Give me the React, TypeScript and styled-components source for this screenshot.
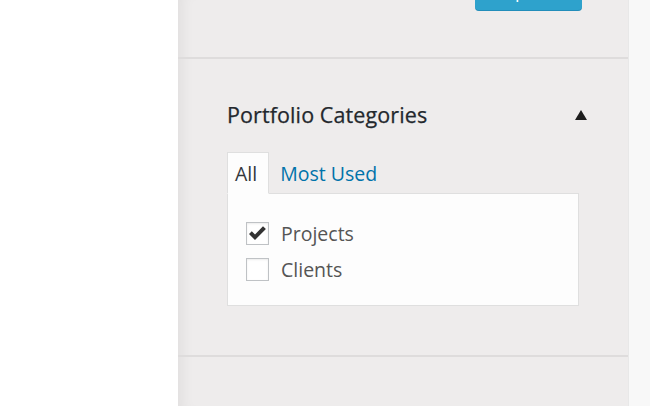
import React from "react";
import styled, { createGlobalStyle } from "styled-components";

const Global = createGlobalStyle`
  html, body { margin: 0; padding: 0; background: #fff; }
  body { font-family: "Open Sans", "Liberation Sans", sans-serif; }
  * { box-sizing: border-box; }
`;

const Page = styled.div`
  display: flex;
  height: 406px;
  overflow: hidden;
`;

const LeftArea = styled.div`
  width: 178px;
  flex: none;
  background: #fff;
`;

const Sidebar = styled.div`
  width: 450px;
  flex: none;
  background: #eeecec;
  box-shadow: inset 14px 0 14px -10px rgba(0, 0, 0, 0.06);
  display: flex;
  flex-direction: column;
`;

const RightStrip = styled.div`
  flex: 1;
  background: #f8f8f8;
  border-left: 1px solid #e8e8e8;
`;

const TopBox = styled.div`
  height: 59px;
  border-bottom: 2px solid #dedcdc;
  display: flex;
  justify-content: flex-end;
  padding-right: 46px;
`;

const PrimaryButton = styled.div`
  width: 107px;
  height: 11px;
  background: #2ea2cc;
  border-radius: 0 0 4px 4px;
  box-shadow: inset 0 -1px 0 rgba(0, 80, 130, 0.25);
  overflow: hidden;
  position: relative;
`;

const ButtonText = styled.span`
  position: absolute;
  left: 27px;
  bottom: 11px;
  color: #fff;
  font-size: 18px;
  line-height: 18px;
  white-space: nowrap;
`;

const CategoryBox = styled.div`
  height: 298px;
  border-bottom: 2px solid #dedcdc;
  padding: 41px 49px 0 49px;
  display: flex;
  flex-direction: column;
`;

const HeaderRow = styled.div`
  display: flex;
  align-items: center;
  justify-content: space-between;
  height: 30px;
  margin-right: -8px;
`;

const Title = styled.h2`
  margin: 0;
  font-size: 21.5px;
  font-weight: 400;
  color: #23282d;
  line-height: 30px;
  letter-spacing: 0.1px;
  -webkit-text-stroke: 0.25px #23282d;
`;

const Toggle = styled.svg`
  width: 12px;
  height: 10px;
  display: block;
`;

const Tabs = styled.div`
  display: flex;
  align-items: flex-end;
  margin-top: 22px;
  position: relative;
  z-index: 1;
`;

const Tab = styled.div<{ $active?: boolean }>`
  height: 42px;
  margin-bottom: -1px;
  display: flex;
  align-items: center;
  font-size: 19.5px;
  color: ${(p) => (p.$active ? "#32373c" : "#0073aa")};
  background: ${(p) => (p.$active ? "#fdfdfd" : "transparent")};
  border: 1px solid ${(p) => (p.$active ? "#dfdfdf" : "transparent")};
  border-bottom: 1px solid ${(p) => (p.$active ? "#fdfdfd" : "transparent")};
  padding: 0 ${(p) => (p.$active ? "11px 0 7px" : "0 0 10px")};
`;

const Panel = styled.div`
  height: 113px;
  width: 352px;
  background: #fdfdfd;
  border: 1px solid #dfdfdf;
  padding: 28px 0 0 18px;
  display: flex;
  flex-direction: column;
  gap: 13px;
`;

const Item = styled.label`
  display: flex;
  align-items: center;
  gap: 12px;
  height: 23px;
  font-size: 19.5px;
  color: #555;
`;

const Box = styled.span`
  width: 23px;
  height: 23px;
  flex: none;
  border: 1px solid #bfc2c5;
  background: #fff;
  box-shadow: inset 0 1px 2px rgba(0, 0, 0, 0.08);
  display: flex;
  align-items: center;
  justify-content: center;
`;

const Check = styled.svg`
  width: 19px;
  height: 17px;
  display: block;
`;

const BottomBox = styled.div`
  flex: 1;
`;

export default function App() {
  return (
    <>
      <Global />
      <Page>
        <LeftArea />
        <Sidebar>
          <TopBox>
            <PrimaryButton>
              <ButtonText>Update</ButtonText>
            </PrimaryButton>
          </TopBox>
          <CategoryBox>
            <HeaderRow>
              <Title>Portfolio Categories</Title>
              <Toggle viewBox="0 0 12 10">
                <polygon points="6,0 12,10 0,10" fill="#1d1d1d" />
              </Toggle>
            </HeaderRow>
            <Tabs>
              <Tab $active>All</Tab>
              <Tab>Most Used</Tab>
            </Tabs>
            <Panel>
              <Item>
                <Box>
                  <Check viewBox="0 0 19 17">
                    <path
                      d="M1 9 L3.8 6.2 L7 9.4 L15 1.2 L17.9 4 L7 15 Z"
                      fill="#333"
                    />
                  </Check>
                </Box>
                Projects
              </Item>
              <Item>
                <Box />
                Clients
              </Item>
            </Panel>
          </CategoryBox>
          <BottomBox />
        </Sidebar>
        <RightStrip />
      </Page>
    </>
  );
}
